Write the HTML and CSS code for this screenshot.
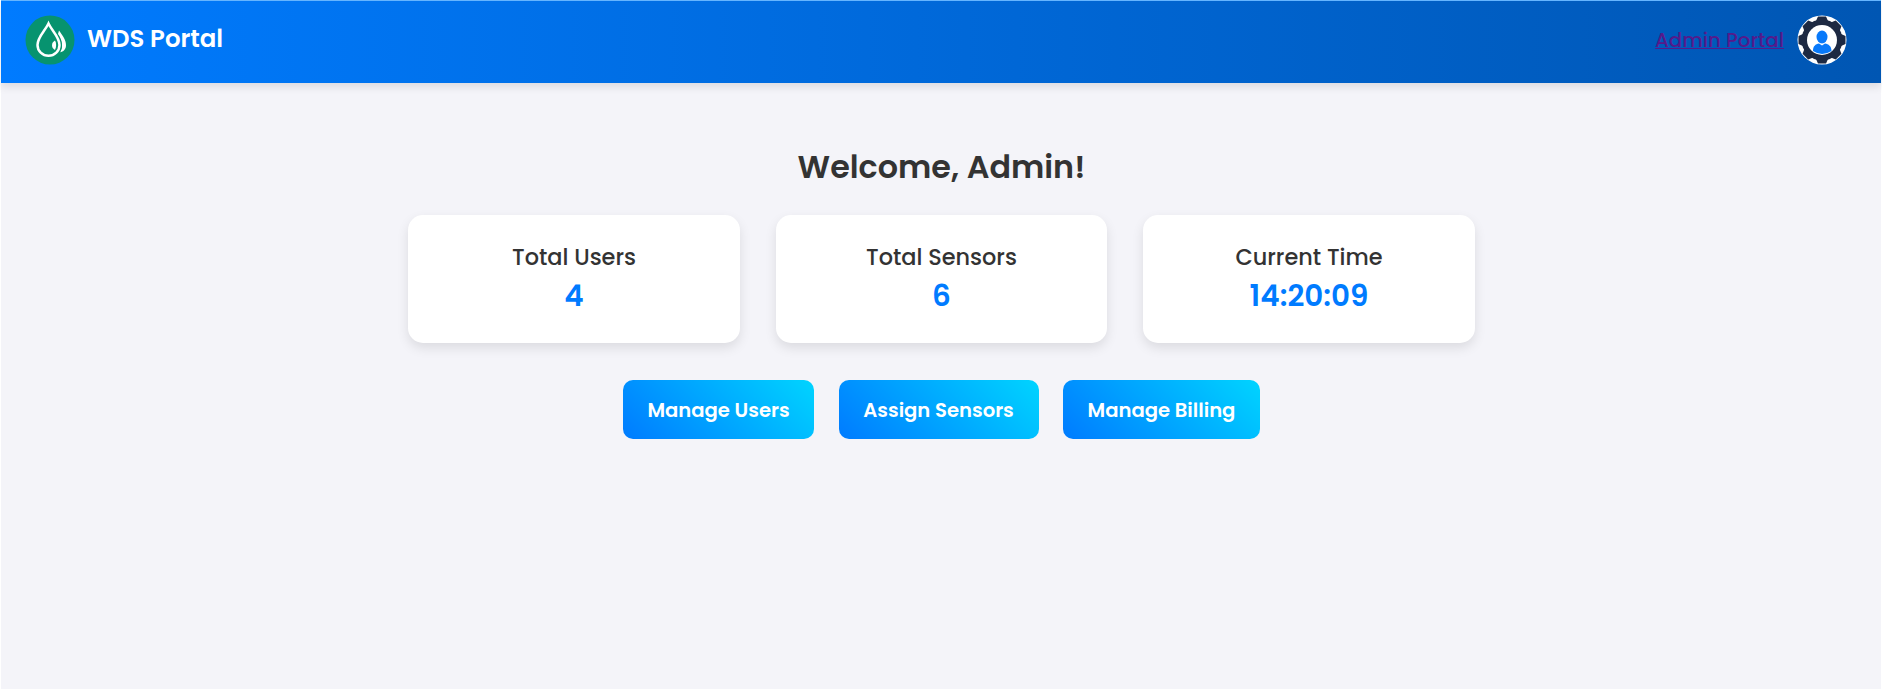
FILE: index.html
```html
<!DOCTYPE html>
<html lang="en">
<head>
<meta charset="utf-8">
<title>WDS Portal</title>
<link rel="stylesheet" href="styles.css">
</head>
<body>
<div class="page">
  <header class="navbar">
    <div class="brand">
      <svg class="logo" viewBox="0 0 50 50">
        <circle cx="25" cy="25" r="24.5" fill="#07936f"/>
        <path d="M34 15.5C38 21 41 25 41 30.2C41 34 38.5 36.8 35 37.3C38.2 32 37.5 25 33 19Z" fill="#fff"/>
        <path d="M30.5 17.5C36 25 38.5 31 34.5 36.5" fill="none" stroke="#07936f" stroke-width="1.5"/>
        <path d="M23.5 8.500C20 16 12.500 22 12.500 30A11 10.800 0 0 0 34.500 30C34.500 22 27 16 23.500 8.500Z" fill="#07936f" stroke="#fff" stroke-width="2.500"/>
        <path d="M30 25.500C26 27.500 26 33 30 35C31.500 32 31.500 28 30 25.500Z" fill="#fff"/>
      </svg>
      <span class="brand-name">WDS Portal</span>
    </div>
    <div class="account">
      <a class="account-link" href="#">Admin Portal</a>
      <svg class="avatar" viewBox="0 0 50 50">
        <defs><clipPath id="disc"><circle cx="25" cy="25" r="24.500"/></clipPath></defs>
        <circle cx="25" cy="25" r="24.500" fill="#fff"/>
        <g clip-path="url(#disc)" fill="#1d2942">
          <circle cx="25" cy="25" r="20.500"/>
          <path id="tooth" d="M18.500 7L21 1.500H29L31.500 7Z"/>
          <use href="#tooth" transform="rotate(45 25 25)"/>
          <use href="#tooth" transform="rotate(90 25 25)"/>
          <use href="#tooth" transform="rotate(135 25 25)"/>
          <use href="#tooth" transform="rotate(180 25 25)"/>
          <use href="#tooth" transform="rotate(225 25 25)"/>
          <use href="#tooth" transform="rotate(270 25 25)"/>
          <use href="#tooth" transform="rotate(315 25 25)"/>
        </g>
        <circle cx="25" cy="25" r="15" fill="#fff"/>
        <path d="M16 36C16 31 18.500 29.200 22 28.500L25 30.500L28 28.500C31.500 29.200 34.500 31 34.500 36Q25 42 16 36Z" fill="#0879fa"/>
        <ellipse cx="25" cy="22" rx="5.500" ry="6.500" fill="#0879fa"/>
      </svg>
    </div>
  </header>
  <main class="content">
    <h1 class="welcome">Welcome, Admin!</h1>
    <section class="stats">
      <div class="card"><h2 class="label">Total Users</h2><p class="value">4</p></div>
      <div class="card"><h2 class="label">Total Sensors</h2><p class="value">6</p></div>
      <div class="card"><h2 class="label">Current Time</h2><p class="value">14:20:09</p></div>
    </section>
    <nav class="actions">
      <a class="button manage-users">Manage Users</a>
      <a class="button assign-sensors">Assign Sensors</a>
      <a class="button manage-billing">Manage Billing</a>
    </nav>
  </main>
</div>
</body>
</html>
```
FILE: styles.css
```css
* { box-sizing: border-box; }
body {
  margin: 0;
  height: 691px;
  padding: 1px 1px 2px;
  background: #fff;
  font-family: Poppins, Inter, "Open Sans", sans-serif;
  color: #333;
}
.page { height: 688px; background: #f4f4f9; }
.navbar {
  display: flex;
  justify-content: space-between;
  align-items: center;
  height: 82px;
  padding: 0 34px 4px 24px;
  background: linear-gradient(90deg, #007bff, #0056b3);
  box-shadow: 0 -1px 0 #65b5ff, 0 4px 8px rgba(0, 0, 0, 0.1);
}
.brand, .account { display: flex; align-items: center; }
.brand { gap: 12px; }
.account { gap: 13px; }
.logo, .avatar { display: block; width: 50px; height: 50px; }
.brand-name { color: #fff; font-size: 24.4px; font-weight: 600; padding-bottom: 3px; }
.account-link {
  color: #551a8b;
  font-size: 19.8px;
  font-weight: 500;
}
.content {
  display: flex;
  flex-direction: column;
  align-items: center;
  padding: 60px 0 0 1px;
}
.welcome { margin: 0; height: 48px; line-height: 48px; font-size: 31.8px; font-weight: 600; }
.stats { display: grid; grid-template-columns: repeat(3, 331.5px); gap: 36px; margin-top: 24px; }
.card {
  height: 128px;
  padding-top: 25px;
  border-radius: 15px;
  background: #fff;
  text-align: center;
  box-shadow: 0 5px 12px rgba(0, 0, 0, 0.1);
}
.label { margin: 0; height: 34px; line-height: 34px; font-size: 22.4px; font-weight: 500; }
.value { margin: 0; height: 43px; line-height: 43px; font-size: 29.4px; font-weight: 600; color: #007bff; }
.actions { display: flex; gap: 24.5px; margin-top: 37px; }
.button {
  height: 59px;
  line-height: 60px;
  border-radius: 10px;
  background: linear-gradient(45deg, #007bff, #00d4ff);
  color: #fff;
  font-size: 19.6px;
  font-weight: 600;
  text-align: center;
  white-space: nowrap;
}
.manage-users { width: 191px; }
.assign-sensors { width: 200px; }
.manage-billing { width: 197px; }
```
